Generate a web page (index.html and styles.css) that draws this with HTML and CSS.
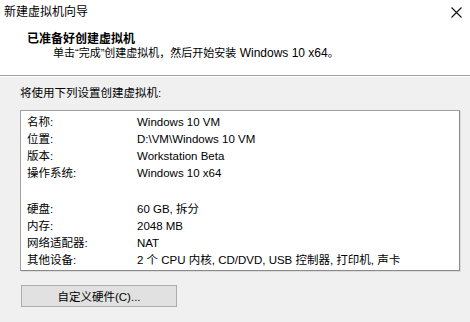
FILE: index.html
```html
<!DOCTYPE html>
<html lang="zh-CN">
<head>
  <meta charset="UTF-8">
  <title>新建虚拟机向导</title>
  <link rel="stylesheet" href="styles.css">
</head>
<body>

  <div class="header">
    <div class="titlebar">
      <span class="title">新建虚拟机向导</span>
      <svg class="close" width="11" height="11" viewBox="0 0 11 11">
        <path d="M0.5 0.5 L10.5 10.5 M10.5 0.5 L0.5 10.5" stroke="#111" stroke-width="1.1" fill="none"/>
      </svg>
    </div>
    <div class="heading">已准备好创建虚拟机</div>
    <div class="subtext"><span class="cjk">单击“完成”创建虚拟机，然后开始安装</span> Windows 10 x64<span class="cjk">。</span></div>
  </div>
  <div class="sep"></div>

  <div class="content">
    <div class="intro">将使用下列设置创建虚拟机:</div>

    <div class="summary">
      <div class="row"><span class="label">名称:</span><span class="value">Windows 10 VM</span></div>
      <div class="row"><span class="label">位置:</span><span class="value">D:\VM\Windows 10 VM</span></div>
      <div class="row"><span class="label">版本:</span><span class="value">Workstation Beta</span></div>
      <div class="row"><span class="label">操作系统:</span><span class="value">Windows 10 x64</span></div>
      <div class="spacer"></div>
      <div class="row"><span class="label">硬盘:</span><span class="value">60 GB, 拆分</span></div>
      <div class="row"><span class="label">内存:</span><span class="value">2048 MB</span></div>
      <div class="row"><span class="label">网络适配器:</span><span class="value">NAT</span></div>
      <div class="row"><span class="label">其他设备:</span><span class="value">2 个 CPU 内核, CD/DVD, USB 控制器, 打印机, 声卡</span></div>
    </div>

    <button class="button">自定义硬件(C)...</button>
  </div>

</body>
</html>
```

FILE: styles.css
```css
body {
  margin: 0;
  padding: 0;
  width: 470px;
  height: 322px;
  overflow: hidden;
  font-family: "Liberation Sans", "Noto Sans CJK SC", sans-serif;
  font-size: 11.5px;
  color: #000;
  background: #f0f0f0;
}

.header {
  height: 75px;
  background: white;
}

.titlebar {
  height: 24px;
  display: flex;
  justify-content: space-between;
  align-items: center;
  padding: 0 8px 0 4px;
}

.title {
  font-size: 12px;
  line-height: 14px;
}

.close {
  display: block;
  flex-shrink: 0;
}

.heading {
  padding: 8px 0 0 27px;
  font-size: 12px;
  font-weight: bold;
  line-height: 14px;
}

.subtext {
  padding-left: 53px;
  font-size: 12px;
  line-height: 14px;
}

.subtext .cjk {
  font-size: 11px;
}

.sep {
  height: 0;
  border-top: 1px solid #a0a0a0;
  border-bottom: 1px solid #ffffff;
}

.content {
  padding: 8px 0 0 20px;
}

.intro {
  line-height: 17px;
}

.summary {
  width: 432px;
  margin-top: 8px;
  padding: 3px 0 1px 6px;
  background: white;
  border: 1px solid #a0a0a0;
  border-right-color: #8a8a8a;
  border-bottom-color: #8a8a8a;
  box-shadow: 1px 1px 0 #dcdcdc;
}

.row {
  display: flex;
  line-height: 17px;
  white-space: nowrap;
}

.label {
  width: 110px;
}

.spacer {
  height: 19px;
}

.button {
  display: block;
  width: 156px;
  height: 22px;
  margin: 14px 0 0 1px;
  padding: 0;
  font-family: "Liberation Sans", "Noto Sans CJK SC", sans-serif;
  font-size: 11.5px;
  color: #000;
  background: #e1e1e1;
  border: 1px solid #adadad;
}
```
